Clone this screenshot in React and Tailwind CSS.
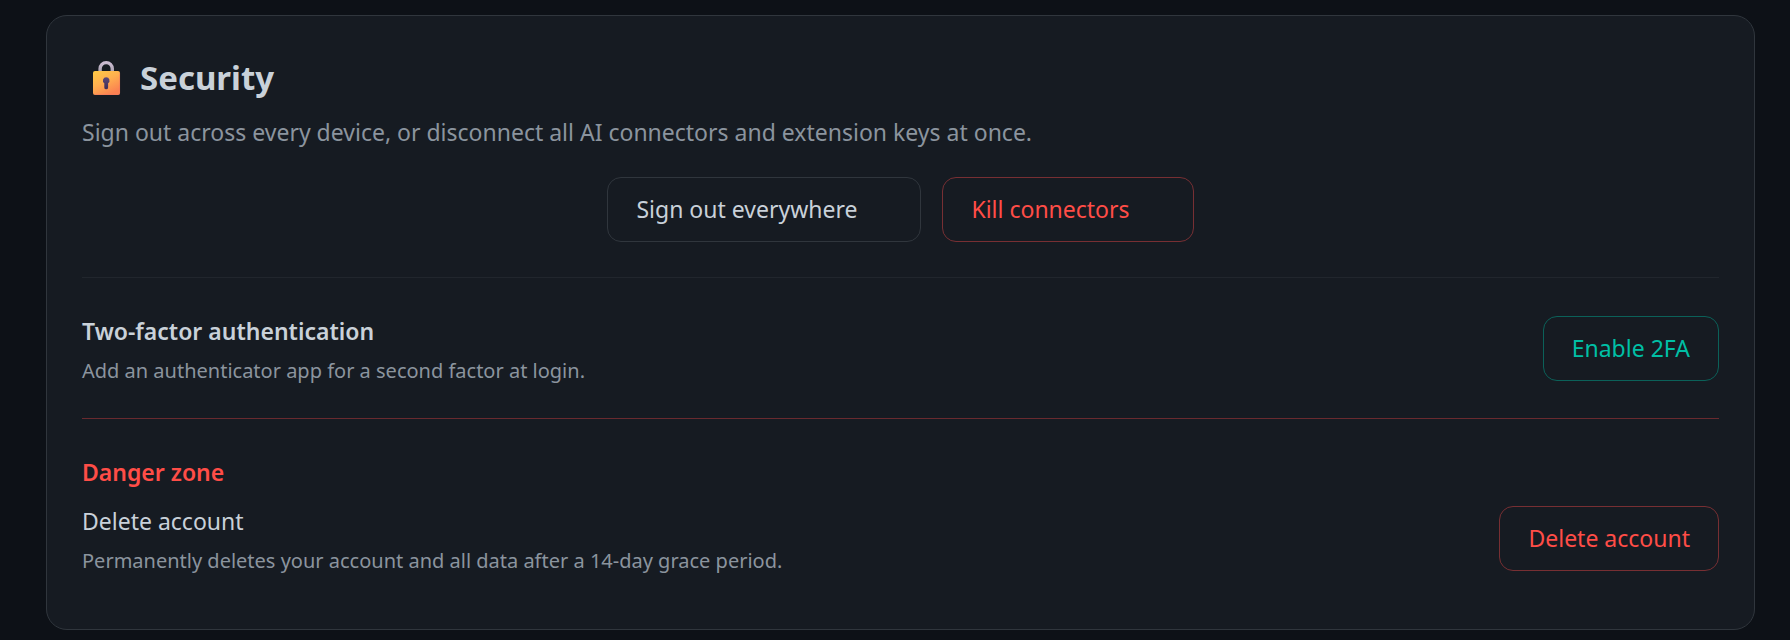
import React from "react";

function LockIcon() {
  return (
    <svg viewBox="0 0 28 36" className="ml-[11px] h-9 w-7 shrink-0" aria-hidden="true">
      <defs>
        <linearGradient id="lockBody" x1="0" y1="0" x2="0.6" y2="1">
          <stop offset="0" stopColor="#ffcb45" />
          <stop offset="0.5" stopColor="#ffb04f" />
          <stop offset="1" stopColor="#fb8151" />
        </linearGradient>
        <linearGradient id="lockShackle" x1="0" y1="0" x2="0" y2="1">
          <stop offset="0" stopColor="#cbbcd2" />
          <stop offset="1" stopColor="#a6a0ad" />
        </linearGradient>
        <linearGradient id="lockHole" x1="0" y1="0" x2="0" y2="1">
          <stop offset="0" stopColor="#5b4878" />
          <stop offset="1" stopColor="#3f2c55" />
        </linearGradient>
      </defs>
      <path d="M7.1 13V8.7a6.1 6.1 0 0 1 12.2 0V13" fill="none" stroke="url(#lockShackle)" strokeWidth="3.4" />
      <rect x="0" y="11" width="27" height="24" rx="2" fill="url(#lockBody)" />
      <path d="M2 34.5h23.2a1.5 1.5 0 0 0 1.4-1.5V13" fill="none" stroke="#f0745f" strokeOpacity="0.5" strokeWidth="0.9" />
      <path d="M13.2 17.2a3.3 3.3 0 0 0-1.9 6v4.2a1.9 1.9 0 0 0 3.8 0v-4.2a3.3 3.3 0 0 0-1.9-6z" fill="url(#lockHole)" />
    </svg>
  );
}

const tones = {
  neutral: "border-[#30363d] text-[#c9d1d9]",
  danger: "border-[#772f33] text-[#ff4d47]",
  accent: "border-[#0b6159] text-[#00bfa5]",
};

function ActionButton({ tone, wide = false, children }) {
  return (
    <button
      type="button"
      className={`h-[65px] shrink-0 rounded-[14px] border pl-7 text-left text-[23px] ${wide ? "pr-[63px]" : "pr-7"} ${tones[tone]}`}
    >
      {children}
    </button>
  );
}

export default function App() {
  return (
    <main className="min-h-screen bg-[#0d1117] pt-[15px] pr-[35px] pb-[9px] pl-[46px] font-['Noto_Sans','Open_Sans',sans-serif] text-[23px] text-[#c9d1d9]">
      <section className="rounded-[21px] border border-[#30363d] bg-[#161b22] px-[35px] pt-[35px] pb-14">
        <h2 className="flex items-center gap-[19px] text-[33px] leading-[54px] font-bold">
          <LockIcon />
          Security
        </h2>
        <p className="leading-[54px] text-[#8b949e]">
          Sign out across every device, or disconnect all AI connectors and extension keys at once.
        </p>
        <div className="mt-[18px] flex justify-center gap-[21px]">
          <ActionButton tone="neutral" wide>Sign out everywhere</ActionButton>
          <ActionButton tone="danger" wide>Kill connectors</ActionButton>
        </div>
        <div className="mt-[35px] flex items-center justify-between gap-6 border-t border-[#21262d] py-[35px]">
          <div>
            <h3 className="leading-9 font-semibold">Two-factor authentication</h3>
            <p className="mt-2.5 text-xl leading-6 text-[#8b949e]">Add an authenticator app for a second factor at login.</p>
          </div>
          <ActionButton tone="accent">Enable 2FA</ActionButton>
        </div>
        <div className="border-t border-[#692a2f] pt-[35px]">
          <h3 className="leading-9 font-semibold text-[#ff4d47]">Danger zone</h3>
          <div className="mt-[13px] flex items-center justify-between gap-6">
            <div>
              <h4 className="leading-9">Delete account</h4>
              <p className="mt-2.5 text-xl leading-6 text-[#8b949e]">Permanently deletes your account and all data after a 14-day grace period.</p>
            </div>
            <ActionButton tone="danger">Delete account</ActionButton>
          </div>
        </div>
      </section>
    </main>
  );
}
